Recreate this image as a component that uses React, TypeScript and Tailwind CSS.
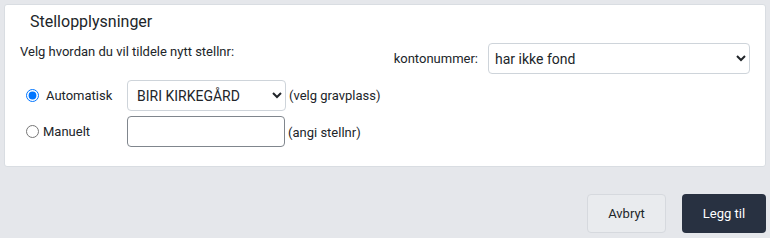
import React from 'react';

export default function App() {
  return (
    <div className="min-h-screen bg-[#e5e7eb] p-1 font-['Roboto',sans-serif] text-[#212529]">
      <div className="rounded-[3px] border border-[#d9dde2] bg-white pt-[5px] pb-[19px] pl-[15px] pr-[15px]">
        <h2 className="pl-[10px] text-[16px] leading-6 font-normal">Stellopplysninger</h2>

        <div className="mt-2 flex items-start justify-between">
          <p className="text-[13px] leading-5">Velg hvordan du vil tildele nytt stellnr:</p>
          <div className="mt-px flex items-center gap-[10px]">
            <span className="text-[13px]">kontonummer:</span>
            <select
              defaultValue="none"
              className="h-[31px] w-[262px] rounded-[4px] border border-[#ced4da] bg-white pl-[2px] text-[14px]"
            >
              <option value="none">har ikke fond</option>
            </select>
          </div>
        </div>

        <div className="mt-[6px] flex flex-col gap-[5px]">
          <div className="flex items-center">
            <label className="flex w-[107px] items-center text-[13px]">
              <input type="radio" name="stellnr" defaultChecked className="ml-[6px] h-[13px] w-[13px]" />
              <span className="ml-[7px]">Automatisk</span>
            </label>
            <select
              defaultValue="biri"
              className="h-[31px] w-[159px] rounded-[4px] border border-[#ced4da] bg-white pl-[5px] text-[14px]"
            >
              <option value="biri">BIRI KIRKEGÅRD</option>
            </select>
            <span className="ml-[3px] text-[13px]">(velg gravplass)</span>
          </div>
          <div className="flex items-center">
            <label className="flex w-[107px] items-center text-[13px]">
              <input type="radio" name="stellnr" className="ml-[6px] h-[13px] w-[13px]" />
              <span className="ml-[4px]">Manuelt</span>
            </label>
            <input
              type="text"
              className="h-[31px] w-[158px] rounded-[4px] border border-[#80868d] bg-white px-2 text-[14px]"
            />
            <span className="ml-[3px] mt-[2px] text-[13px]">(angi stellnr)</span>
          </div>
        </div>
      </div>

      <div className="mt-[27px] flex justify-end gap-4">
        <button className="h-[39px] w-[79px] rounded-[4px] border border-[#d6d9de] bg-[#e9ebee] text-[13px] text-[#212529]">
          Avbryt
        </button>
        <button className="h-[39px] w-[84px] rounded-[4px] bg-[#283141] text-[13px] text-white">
          Legg til
        </button>
      </div>
    </div>
  );
}
